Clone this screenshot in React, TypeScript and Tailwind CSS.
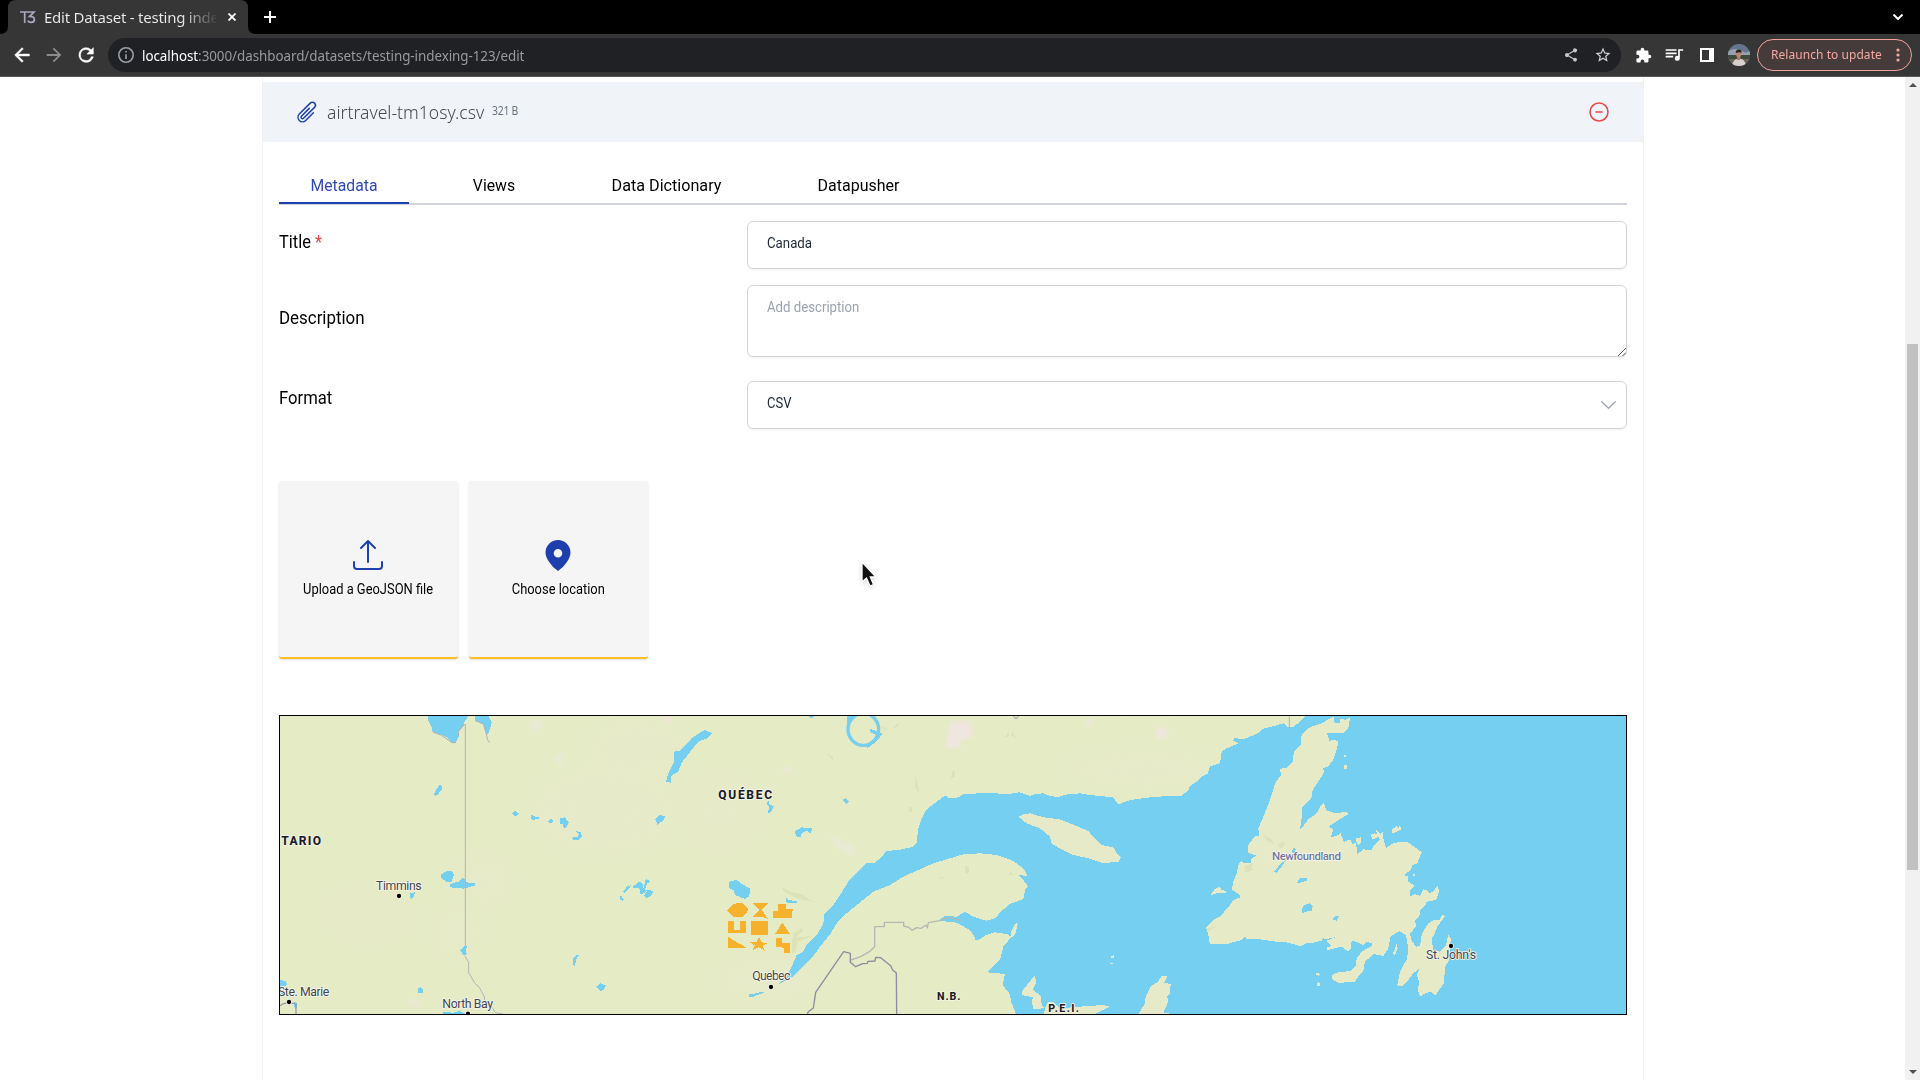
import React from "react";

const WATER = "#75cff0";
const LAND = "#e5ebc4";

/* Map geometry is written in thirds of a pixel; `at` shifts a tile's points east. */
const at = (dx: number, points: string) =>
  points
    .trim()
    .split(/\s+/)
    .map((p) => {
      const [x, y] = p.split(",").map(Number);
      return `${x + dx},${y}`;
    })
    .join(" ");

const A = 0;
const B = 1050;
const C = 2130;
const D = 3090;

const gulf = [
  at(B, "475,853 500,830 515,800 530,765 548,757 560,735 590,705 610,672 612,645 640,615 660,585 687,542 715,515 740,490 765,488 785,470 800,453 835,450 880,440 892,425 893,390 905,355 918,330 950,305 975,287 990,295 1015,292 1030,282 1080,280"),
  at(C, "50,280 80,283 118,277 150,288 165,282 190,280 210,288 235,291 262,283 300,280 330,285 400,292 405,300 415,313 450,300 500,293 560,288 605,288 625,270 630,258 650,245 668,228 682,222 690,200 720,190 725,155 740,145 775,130 760,122 762,114 790,118 830,102 850,86 885,77 910,70 922,82 940,80 960,65 975,48"),
  "4068,48 4068,942",
  at(C, "108,942 95,910 88,880 68,855 75,822 22,817 60,780 70,740 95,710 80,702 45,697 15,707 0,718"),
  at(B, "1068,722 1060,705 1050,690 1010,668 955,662 975,648 1010,650 1035,635 1060,650"),
  at(C, "0,657 20,662 45,655 65,633 90,612 130,597 135,570 145,560 130,540 115,525 143,528 130,505 95,480 50,465 0,460"),
  at(B, "1030,463 980,478 940,490 900,508 850,530 810,555 760,575 710,615 680,640 650,670 632,700 600,740 575,775 540,810 515,832"),
].join(" ");

const newfoundland = [
  at(D, "100,50 104,68 120,68 122,55 135,60 150,52 145,85 130,98 80,98 88,122 103,120 115,124 110,150 100,178 86,198 70,205 72,218 55,245 38,270 35,292 20,308 5,322 5,355 0,390 25,358 50,340 62,318 72,308 78,330 105,340 140,335 146,342 115,360 86,380 100,388 92,412 110,408 122,400 132,426 150,418 158,432 168,428 172,462 190,448 214,450 225,432 240,420 230,398 228,388 240,402 248,395 250,415 258,444 275,432 300,425 322,425 365,457 352,490 338,495 332,510 312,525 325,530 325,545 345,558 330,572 330,590 345,582 360,588 370,568 380,570 390,580 402,572 412,557 418,572 408,600 380,605 378,615 360,630 358,650 345,660 348,680 330,700 335,722 348,740 360,738 366,700 385,670 400,660 418,660 428,643 434,650 412,680 402,705 395,715 400,752 420,755 438,735 445,704 452,715 450,770 445,785 435,800 432,850 405,887 395,875 375,880 360,890 354,870 357,845 350,825 360,805 340,820 325,840 312,855 300,860 292,855 300,815 322,775 324,740 318,705 298,693 272,710 265,745 250,768 220,762 212,770 195,785 190,812 175,830 165,845 145,845 120,850 98,840 96,826 110,818 150,813 168,795 170,775 185,755 215,738 215,728 200,727 190,735 160,722 152,730 155,745 145,755 125,740 105,745 82,750 80,743 95,738 80,722 105,712 75,718 70,712 65,722 45,727 20,730 0,740"),
  at(C, "960,738 925,728 880,724 840,718 800,718 795,710 785,720 740,732 690,733 685,705 678,683 700,660 720,650 750,615 760,600 780,592 778,582 755,570 760,545 770,520 775,495 785,482 790,490 812,490 815,475 828,467 805,458 805,435 825,408 838,408 835,385 850,350 865,312 875,285 885,250 905,222 898,207 920,203 938,185 942,155 962,135 965,105 980,88 1000,78 1020,72"),
].join(" ");

const islands = [
  at(C, "115,350 130,343 150,340 190,352 240,358 290,378 325,393 340,412 365,435 400,442 410,460 422,472 415,487 365,488 325,475 280,465 250,450 215,432 210,410 180,385 140,370"),
  at(C, "165,825 168,850 158,868 182,888 185,912 192,925 160,927 155,905 160,892 125,885 125,875 145,850"),
  at(C, "192,942 195,925 205,905 220,905 240,925 300,920 370,915 388,920 350,940 348,942"),
  at(C, "475,942 495,910 497,890 512,860 535,845 545,826 562,830 552,848 572,852 570,880 562,890 565,905 550,937 575,942"),
  at(C, "693,585 703,568 720,560 725,570 740,573 735,580 715,578"),
  at(C, "93,710 95,690 108,668 113,672 106,700 98,712"),
  at(C, "393,770 404,764 402,772 395,776"),
  at(C, "390,789 398,788 398,792 390,792"),
  at(D, "277,388 290,378 296,383 298,376 305,388 295,392 280,400 277,398"),
  at(D, "290,730 293,745 285,765 278,762 285,745"),
  at(D, "214,403 225,400 238,410 220,418 215,415"),
  at(D, "168,415 182,412 182,428 175,434 168,425"),
  at(D, "133,195 143,197 141,207 133,206"),
  at(D, "132,164 138,164 138,170 132,170"),
  at(D, "48,817 60,822 56,828 49,824"),
  at(D, "50,850 57,846 62,856 50,858"),
  at(D, "339,521 345,521 345,527 339,527"),
  at(D, "0,48 12,48 0,62 -10,72"),
];

const lakes = [
  at(A, "474,48 596,48 584,62 582,78 565,95 567,108 557,128 546,128 535,115 515,105 488,95 484,78 474,60"),
  at(A, "614,48 655,48 665,68 660,85 656,100 649,105 646,90 640,72 616,62"),
  at(A, "495,275 508,255 516,258 515,268 505,282 497,287 492,284"),
  at(A, "726,340 735,333 746,340 740,348 730,346"),
  at(A, "783,343 795,350 815,354 798,357 785,362"),
  at(A, "833,364 842,357 850,360 845,370 836,368"),
  at(A, "870,355 885,352 896,368 888,384 878,382 880,374 871,372"),
  at(A, "917,392 932,397 936,408 925,420 905,418 912,410 924,410 926,402"),
  at(A, "513,524 530,513 544,512 552,524 544,548 530,545 515,535"),
  at(A, "540,552 565,545 580,533 590,547 615,550 614,557 580,566 542,562"),
  at(A, "420,580 435,577 432,588 425,597 420,594"),
  at(A, "571,752 580,740 592,738 588,750 590,762 582,767"),
  at(A, "910,775 920,763 927,765 918,780 915,798 908,795"),
  at(A, "978,860 992,850 1008,857 1000,870 990,873"),
  at(A, "442,866 452,862 460,870 457,880 445,880"),
  at(A, "30,840 48,843 51,856 30,860"),
  at(A, "30,868 42,870 38,890 30,892"),
  at(A, "520,936 550,938 570,932 586,942 520,942"),
  at(A, "70,905 82,910 82,922 75,928"),
  at(B, "0,600 2,585 12,600 8,602"),
  at(B, "10,575 22,558 33,556 28,566 14,580"),
  at(B, "36,562 60,544 68,552 70,565 78,535 90,545 80,552 75,570 98,572 97,585 80,595 72,588 80,574 62,585 60,566"),
  at(B, "255,90 278,100 262,115 235,125 215,150 185,188 175,215 155,225 152,248 138,246 145,220 162,185 163,155 180,152 215,115 240,98"),
  at(B, "106,358 120,345 138,350 128,362 112,374"),
  at(B, "444,300 450,315 462,318 450,340 445,338 446,320 441,312"),
  at(B, "523,395 545,382 575,385 574,402 560,392 545,400 543,410 532,412"),
  at(B, "667,297 678,295 688,306 678,312"),
  at(B, "328,545 350,540 365,552 390,565 388,588 375,597 345,585 342,572 328,565"),
  at(B, "498,594 508,600 530,604 530,608 500,608"),
  at(B, "384,884 400,882 430,874 432,878 400,890 388,890"),
  at(B, "564,48 582,48 582,52 572,54"),
  at(C, "880,516 895,500 905,488 918,480 905,500 890,518"),
  at(C, "948,550 960,536 980,535 980,542 955,550"),
  at(C, "940,445 947,446 945,460 935,458"),
  at(D, "5,628 12,615 30,609 38,620 35,632 15,636 6,640"),
  at(D, "99,655 108,647 117,647 110,662 101,660"),
  at(D, "0,534 20,536 18,544 0,542"),
];

const shade = [
  at(B, "482,558 510,575 545,582 580,606 530,595 492,575"),
  at(B, "520,700 545,685 550,690 530,712 575,708 560,715 532,725 528,750 515,765 515,735"),
  at(B, "625,158 638,170 638,182 626,170"),
  at(B, "885,228 893,250 898,280 886,262"),
  at(B, "995,215 1006,212 1006,232 994,234"),
  at(B, "782,75 800,85 795,95"),
  at(B, "820,80 837,68 832,80 822,86"),
  at(B, "868,322 876,322 876,336 868,336"),
  at(B, "1035,498 1047,500 1045,522 1034,520"),
  at(B, "955,530 978,530 962,536"),
  at(C, "75,112 85,95 88,108"),
  at(C, "92,106 98,94 108,112"),
  at(C, "848,402 875,418 882,432 858,420"),
  at(C, "893,435 912,422 914,436 902,445"),
  at(C, "790,500 815,490 818,510 798,518"),
  at(C, "85,525 92,514 102,527"),
  at(C, "680,685 712,678 685,694"),
];

const blotches = [
  [800, 75, 18, 18, "#eae9d6"],
  [866, 180, 10, 18, "#eae9d6"],
  [2130 + 545, 98, 20, 18, "#efe6de"],
  [2130 + 325, 65, 10, 14, "#ebe8d8"],
  [1050 + 142, 56, 12, 12, "#f0e3da"],
  [1050 + 500, 210, 14, 10, "#ebe8d8"],
  [430, 908, 16, 14, "#ebe8d4"],
] as const;

const washes = [
  [640, 540, 90, 60, "#e7eaca"],
  [1000, 330, 220, 140, "#e6eac9"],
  [1100, 140, 160, 90, "#e6eac9"],
  [560, 700, 70, 70, "#e7eaca"],
  [1500, 840, 160, 60, "#e7eaca"],
  [1350, 330, 140, 120, "#e6eac8"],
  [300, 640, 140, 90, "#e6eac8"],
  [2130 + 500, 210, 260, 60, "#e6eac9"],
] as const;

const shapes = [
  "321,630 342,611 368,609 384,626 382,636 368,650 338,650",
  "398,609 444,609 426,630 443,656 432,652 398,650 418,630",
  "475,612 497,612 497,628 518,628 516,654 459,654 459,632 475,632",
  "324,664 341,664 341,689 360,689 360,662 378,662 378,699 324,699",
  "393,664 443,663 444,705 393,704",
  "487,668 510,701 465,702",
  "324,711 381,744 324,744",
  "417,710 424,727 443,729 428,738 434,752 416,742 398,751 404,736 390,727 410,727",
  "468,714 486,714 486,729 509,729 509,758 491,758 491,743 468,741",
];

type LabelProps = { x: number; y: number; w: number; size: number; kind: "city" | "state" | "island"; children: string };

function MapLabel({ x, y, w, size, kind, children }: LabelProps) {
  const fill = kind === "state" ? "#1c1c24" : kind === "island" ? "#7474a2" : "#45454d";
  return (
    <text
      x={x}
      y={y}
      textLength={w}
      fontSize={size}
      fill={fill}
      stroke="#f5f6ec"
      strokeWidth={5}
      strokeLinejoin="round"
      paintOrder="stroke"
      fontWeight={kind === "state" ? 800 : kind === "island" ? 500 : 400}
      fontFamily="Roboto, sans-serif"
    >
      {children}
    </text>
  );
}

function Poly({ list, fill }: { list: readonly string[]; fill: string }) {
  return (
    <>
      {list.map((p) => (
        <polygon key={p} points={p} fill={fill} shapeRendering="crispEdges" />
      ))}
    </>
  );
}

function CoverageMap() {
  return (
    <div className="mt-14 h-[300px] w-[1348px] border border-black">
      <svg className="block h-full w-full" viewBox="30 48 4038 894" preserveAspectRatio="none">
        <defs>
          <filter id="soft" x="-100%" y="-100%" width="300%" height="300%">
            <feGaussianBlur stdDeviation="6" />
          </filter>
          <filter id="softer" x="-100%" y="-100%" width="300%" height="300%">
            <feGaussianBlur stdDeviation="40" />
          </filter>
        </defs>
        <rect x="30" y="48" width="4038" height="894" fill={LAND} />
        {washes.map(([x, y, rx, ry, c]) => (
          <ellipse key={`${x}-${y}`} cx={x} cy={y} rx={rx} ry={ry} fill={c} filter="url(#softer)" />
        ))}
        {blotches.map(([x, y, rx, ry, c]) => (
          <ellipse key={`${x}-${y}`} cx={x} cy={y} rx={rx} ry={ry} fill={c} filter="url(#soft)" />
        ))}
        <polygon points={at(B, "990,62 1048,62 1060,110 1025,118 1018,145 975,142 985,95")} fill="#f0e6e0" filter="url(#soft)" />
        <polygon points={at(B, "632,405 690,430 710,465 680,462 640,435")} fill="#e9ead4" filter="url(#soft)" />
        <polygon points={gulf} fill={WATER} shapeRendering="crispEdges" />
        <polygon points={newfoundland} fill="#e6eac6" shapeRendering="crispEdges" />
        <Poly list={islands} fill="#e6eac8" />
        <Poly list={shade} fill="#dde2b9" />
        <Poly list={lakes} fill={WATER} />
        <ellipse cx={B + 730} cy={88} rx={46} ry={48} fill="none" stroke={WATER} strokeWidth={10} />
        <Poly list={[at(B, "682,48 706,48 690,70 680,75"), at(B, "750,87 775,95 788,102 768,125 742,145 738,134 762,118 768,105 752,98")]} fill={WATER} />
        <g fill="none" strokeLinejoin="round">
          <path d="M586 72V740M584 767L596 787V818L615 850L628 862L643 890L645 910L668 925L676 938L700 942" stroke="#b4b4b8" strokeWidth="3" />
          <path d="M488 96L515 106L546 128H557M565 108V95L584 72M616 62L640 72L650 105L652 118L659 128" stroke="#b0b0bc" strokeWidth="3" />
          <path d="M30 917L42 910H78V942" stroke="#9a9aae" strokeWidth="4" />
          <path d="M3058 48V92" stroke="#b4b4b8" strokeWidth="3" />
          <polyline points={at(B, "692,780 722,770 748,755 764,740 764,680 793,680 793,667 851,667 851,678 866,682 876,691 890,683 903,685 918,675 922,684 925,668 960,662 985,652 1025,662")} stroke="#b7b8b4" strokeWidth="4" />
          <polyline points={at(B, "562,942 565,935 580,924 587,877 671,755 691,760 691,787 707,800 728,791 742,790 744,784 765,783 767,772 782,773 812,797 818,810 829,819 830,942")} stroke="#8d8ca0" strokeWidth="4" />
          <polyline points={at(C, "100,48 108,56 116,48")} stroke="#b7b8b4" strokeWidth="4" />
        </g>
        <g transform="translate(1050 0)">
          <Poly list={shapes} fill="#f6b22c" />
        </g>
        {[
          [387, 588],
          [57, 906],
          [594, 941],
          [B + 453, 861],
          [D + 453, 738],
        ].map(([x, y]) => (
          <circle key={x} cx={x} cy={y} r="6.5" fill="#000" stroke="#f5f6ec" strokeWidth="4" paintOrder="stroke" />
        ))}
        <MapLabel x={34} y={436} w={119} size={36} kind="state">TARIO</MapLabel>
        <MapLabel x={318} y={570} w={137} size={37} kind="city">Timmins</MapLabel>
        <MapLabel x={24} y={888} w={154} size={37} kind="city">Ste. Marie</MapLabel>
        <MapLabel x={517} y={923} w={152} size={37} kind="city">North Bay</MapLabel>
        <MapLabel x={B + 295} y={296} w={161} size={36} kind="state">QUÉBEC</MapLabel>
        <MapLabel x={B + 397} y={841} w={114} size={37} kind="city">Quebec</MapLabel>
        <MapLabel x={B + 951} y={900} w={70} size={32} kind="state">N.B.</MapLabel>
        <MapLabel x={C + 205} y={937} w={92} size={32} kind="state">P.E.I.</MapLabel>
        <MapLabel x={C + 876} y={481} w={207} size={35} kind="island">Newfoundland</MapLabel>
        <MapLabel x={D + 378} y={776} w={150} size={37} kind="city">St. John's</MapLabel>
      </svg>
    </div>
  );
}

function TabStrip() {
  return (
    <div className="flex h-[34px] items-end bg-black pl-2">
      <div className="relative flex h-[34px] w-[240px] items-center">
        <svg className="absolute inset-0 h-[34px] w-[240px] overflow-visible" viewBox="0 0 240 34">
          <path d="M-8 34Q0 34 0 26V8Q0 0 8 0H232Q240 0 240 8V26Q240 34 248 34Z" fill="#363636" />
        </svg>
        <svg className="relative ml-3 h-3.5 w-4" viewBox="0 0 16 14" fill="none" stroke="#aaa9c0" strokeWidth="1.7">
          <path d="M0 2H14L9.600 6.400Q14.400 6.400 14.400 9.400Q14.400 12.400 11 12.400Q8.800 12.400 7.800 10.800M4.700 2V13" />
        </svg>
        <div className="relative ml-2 w-[172px] bg-linear-to-r from-[#ececec] from-80% to-[#363636] to-[102%] bg-clip-text font-['Noto_Sans'] text-[15px] whitespace-nowrap text-transparent">
          <span className="tracking-[-0.24px]">Edit Dataset - testing inde</span>
        </div>
        <svg className="relative ml-3 size-2" viewBox="0 0 8 8" stroke="#fff" strokeWidth="1.8">
          <path d="M.5 .5L7.5 7.5M7.5 .5L.5 7.5" />
        </svg>
      </div>
      <svg className="mb-[11px] ml-4 size-3" viewBox="0 0 12 12" stroke="#fff" strokeWidth="2">
        <path d="M6 0V12M0 6H12" />
      </svg>
      <svg className="mr-[17px] mb-[14px] ml-auto h-1.5 w-2.5" viewBox="0 0 10 6" fill="none" stroke="#fff" strokeWidth="2">
        <path d="M.5 .5L5 5L9.5 .5" />
      </svg>
    </div>
  );
}

function AddressBar() {
  return (
    <div className="flex h-[43px] items-center border-b border-[#5a5a5a] bg-[#363636] pl-[11px] font-['Noto_Sans']">
      <svg className="size-[22px] fill-white" viewBox="0 0 24 24">
        <path d="M20 11H7.83l5.59-5.59L12 4l-8 8 8 8 1.41-1.41L7.83 13H20v-2z" stroke="#fff" strokeWidth=".6" />
      </svg>
      <svg className="ml-2.5 size-[22px] fill-[#8b8b8b]" viewBox="0 0 24 24">
        <path d="M12 4l-1.41 1.41L16.17 11H4v2h12.17l-5.58 5.59L12 20l8-8z" />
      </svg>
      <svg className="ml-2.5 size-[22px] fill-white" viewBox="0 0 24 24">
        <path d="M17.65 6.35A7.96 7.96 0 0012 4a8 8 0 108 10h-2.3A6 6 0 1112 6c1.66 0 3.14.69 4.22 1.78L13 11h7V4z" stroke="#fff" strokeWidth=".6" />
      </svg>
      <div className="ml-[11px] flex h-[34px] w-[1513px] items-center rounded-full bg-[#202124] pl-2.5">
        <svg className="size-4 fill-[#9aa0a6]" viewBox="2 2 20 20">
          <path d="M11 7h2v2h-2zm0 4h2v6h-2zm1-9a10 10 0 100 20 10 10 0 000-20zm0 18a8 8 0 110-16 8 8 0 010 16z" />
        </svg>
        <span className="ml-2 origin-left scale-x-[0.956] text-[14px] tracking-[-0.05px] whitespace-nowrap text-[#9a9a9a]">
          <span className="text-white">localhost</span>:3000/dashboard/datasets/testing-indexing-123/edit
        </span>
        <svg className="mr-[15px] ml-auto size-4 fill-[#c4c7ca]" viewBox="0 0 24 24">
          <path d="M18 16.08c-.76 0-1.44.3-1.96.77L8.91 12.7c.05-.23.09-.46.09-.7s-.04-.47-.09-.7l7.05-4.11A3 3 0 1015 5c0 .24.04.47.09.7L8.04 9.81a3 3 0 100 4.38l7.12 4.16a2.92 2.92 0 102.84-2.27z" />
        </svg>
        <svg className="mr-[9px] size-[18px] fill-[#d0d3d6]" viewBox="0 0 24 24">
          <path d="M22 9.24l-7.19-.62L12 2 9.19 8.63 2 9.24l5.46 4.73L5.82 21 12 17.27 18.18 21l-1.63-7.03L22 9.24zM12 15.4l-3.76 2.27 1-4.28-3.32-2.88 4.38-.38L12 6.1l1.71 4.04 4.38.38-3.32 2.88 1 4.28L12 15.4z" />
        </svg>
      </div>
      <svg className="ml-3.5 size-[17px] fill-white" viewBox="0 0 24 24">
        <path d="M20.5 11H19V7a2 2 0 00-2-2h-4V3.5a2.5 2.5 0 00-5 0V5H4a2 2 0 00-2 2v3.8h1.5a2.7 2.7 0 010 5.4H2V20a2 2 0 002 2h3.800v-1.5a2.700 2.700 0 015.400 0V22H17a2 2 0 002-2v-4h1.500a2.500 2.500 0 000-5z" />
      </svg>
      <svg className="ml-3 size-5 fill-white" viewBox="0 0 24 24">
        <path d="M15 6H2v2h13zM15 10H2v2h13zM2 16h9v-2H2zM17 6v8.180A3 3 0 1019 17V8h4V6z" transform="translate(0 -1)" />
      </svg>
      <svg className="ml-4 size-[14px] fill-white" viewBox="0 0 14 14">
        <path fillRule="evenodd" d="M0 0H14V14H0ZM2 2V12H9V2Z" />
      </svg>
      <svg className="ml-3.5 size-[22px] rounded-full" viewBox="0 0 22 22">
        <rect width="22" height="22" fill="#65758f" />
        <path d="M0 7Q8 3 14 7T22 5V11H0Z" fill="#98a1b0" />
        <rect y="11" width="22" height="4" fill="#3d4a3c" />
        <rect y="15" width="22" height="7" fill="#6a6350" />
        <path d="M4 22Q5 15 10 14.500H12Q17 15 18 22Z" fill="#d9cfcf" />
        <path d="M9 12H12V16H9Z" fill="#b07a62" />
        <ellipse cx="10.700" cy="10" rx="2.600" ry="3.400" fill="#b98770" />
        <path d="M7.800 9Q7.500 5.500 10.700 5.500T13.500 9Q12 7.300 7.800 9Z" fill="#2b1e1a" />
      </svg>
      <div className="ml-[7px] flex h-8 w-[155px] items-center rounded-full border border-[#f2a49c] bg-[#463b3b] pl-[13px] text-[#f2a9a2]">
        <span className="w-[110px] origin-left scale-x-[0.92] text-[13px] tracking-[0.08px] whitespace-nowrap">Relaunch to update</span>
        <svg className="mr-[11px] ml-auto h-3.5 w-1 shrink-0 fill-[#f5aaa2]" viewBox="0 0 4 14">
          <circle cx="2" cy="2" r="1.600" />
          <circle cx="2" cy="7" r="1.600" />
          <circle cx="2" cy="12" r="1.600" />
        </svg>
      </div>
    </div>
  );
}

function FileHeader() {
  return (
    <div className="mt-[5px] flex h-[60px] items-center bg-[#f0f4f9] pr-8 pl-8">
      <svg className="size-6" viewBox="0 0 24 24" fill="none" stroke="#1e40af" strokeWidth="1.500" strokeLinecap="round" strokeLinejoin="round">
        <path d="M18.375 12.739l-7.693 7.693a4.500 4.500 0 01-6.364-6.364l10.940-10.940A3 3 0 1119.500 7.372L8.552 18.320m.009-.010l-.010.010m5.699-9.941l-7.810 7.810a1.500 1.500 0 002.112 2.130" />
      </svg>
      <span className="ml-2 w-[157px] origin-left scale-x-[0.925] font-['Noto_Sans'] text-[19px] font-light whitespace-nowrap text-[#48494c]">airtravel-tm1osy.csv</span>
      <span className="mb-0.5 ml-2 origin-left scale-x-[0.87] font-['Noto_Sans'] text-[12px] tracking-[-0.3px] text-[#6b7280]">321 B</span>
      <svg className="ml-auto size-6" viewBox="0 0 24 24" fill="none" stroke="#ef4444" strokeWidth="1.500" strokeLinecap="round">
        <path d="M15 12H9m12 0a9 9 0 11-18 0 9 9 0 0118 0z" />
      </svg>
    </div>
  );
}

function Tabs() {
  return (
    <div className="mt-7 flex h-[35px] items-start text-[17px] text-black shadow-[inset_0_-2px_0_#d1d5db]">
      <div className="h-[34px] w-[130px] border-b-2 border-[#1e40af] pt-[3px] text-center leading-6 text-[#3049b8]">
        <div className="scale-x-[0.925]">Metadata</div>
      </div>
      <div className="w-[170px] scale-x-[0.93] pt-[3px] text-center leading-6">Views</div>
      <div className="w-[175px] scale-x-[0.95] pt-[3px] text-center leading-6">Data Dictionary</div>
      <div className="w-[209px] scale-x-[0.94] pt-[3px] text-center leading-6">Datapusher</div>
    </div>
  );
}

function Fields() {
  return (
    <div className="grid grid-cols-[468px_880px] text-[19px] text-black">
      <label className="mt-[23px] origin-left scale-x-[0.865] leading-7">
        Title <span className="text-[#ef4444]">*</span>
      </label>
      <div className="mt-4 h-12 rounded-md border border-[#d1d5db] pt-3 pl-[18.500px] text-[14.5px] leading-5 text-[#1f2937] shadow-xs">
        <div className="origin-left scale-x-[0.913]">Canada</div>
      </div>
      <label className="mt-[35px] origin-left scale-x-[0.89] leading-7">Description</label>
      <div className="relative mt-4 h-[72px] rounded-md border border-[#d1d5db] pt-3 pl-[18.500px] text-[14.5px] leading-5 text-[#9ca3af] shadow-xs">
        <div className="origin-left scale-x-[0.91]">Add description</div>
        <svg className="absolute right-0 bottom-0 size-2" viewBox="0 0 8 8" stroke="#555" strokeWidth="1">
          <path d="M0 8L8 0M4.500 8L8 4.500" />
        </svg>
      </div>
      <label className="mt-[27px] origin-left scale-x-[0.875] leading-7">Format</label>
      <div className="mt-6 flex h-12 justify-between rounded-md border border-[#d1d5db] pt-3 pr-2.5 pl-[18.500px] text-[14.5px] leading-5 text-[#1f2937] shadow-xs">
        <div className="origin-left scale-x-[0.9]">CSV</div>
        <svg className="mt-[7px] h-2 w-[15px]" viewBox="0 0 15 8" fill="none" stroke="#9ca3af" strokeWidth="1.200" strokeLinecap="round">
          <path d="M.7 .7L7.500 7.300L14.300 .7" />
        </svg>
      </div>
    </div>
  );
}

function LocationCard({ label, children }: { label: string; children: React.ReactNode }) {
  return (
    <div className="flex h-[178px] w-[179px] flex-col items-center rounded-[3px] border-b-2 border-[#fbbf24] bg-[#f5f5f5] pt-[58px] shadow-sm">
      {children}
      <span className="mt-[7px] scale-x-[0.89] text-[14.5px] leading-6 whitespace-nowrap text-black">{label}</span>
    </div>
  );
}

export default function App() {
  return (
    <div className="flex h-[1080px] w-[1920px] flex-col overflow-hidden bg-white font-[Roboto,sans-serif]">
      <TabStrip />
      <AddressBar />
      <div className="flex min-h-0 flex-1">
        <div className="relative ml-[262px] w-[1382px] border-x border-[#f0f1f4]">
          <FileHeader />
          <div className="px-4">
            <Tabs />
            <Fields />
            <div className="mt-[52px] flex gap-[11px]">
              <LocationCard label="Upload a GeoJSON file">
                <svg className="mr-px h-8 w-8" viewBox="0 0 32 32" fill="none" stroke="#1e40af" strokeWidth="2" strokeLinecap="round" strokeLinejoin="round">
                  <path d="M16 23V2M9 9L16 2L23 9M2 23V27Q2 30 5 30H27Q30 30 30 27V23" />
                </svg>
              </LocationCard>
              <LocationCard label="Choose location">
                <svg className="mr-px h-8 w-8 fill-[#1e40af]" viewBox="0 0 32 32">
                  <path fillRule="evenodd" d="M16 32Q11 29 7.500 23.500Q3.500 18 3.500 13.500A12.500 12.500 0 0128.500 13.500Q28.500 18 24.500 23.500Q21 29 16 32ZM16 10A4.300 4.300 0 1016 18.600A4.300 4.300 0 1016 10Z" />
                </svg>
              </LocationCard>
            </div>
            <CoverageMap />
          </div>
          <svg className="absolute top-[483px] left-[597px] h-7 w-5 drop-shadow-sm" viewBox="0 0 20 28">
            <path d="M2 2V22L6.500 18L10 26L13.500 24.500L10.300 17H16Z" fill="#111" stroke="#fff" strokeWidth="1.300" />
          </svg>
        </div>
        <div className="ml-auto flex w-[15px] flex-col items-center bg-[#f1f1f1]">
          <div className="mt-1.5 h-0 w-0 border-x-4 border-b-4 border-x-transparent border-b-[#505050]" />
          <div className="mt-[257px] h-[526px] w-[11px] bg-[#c1c1c1]" />
          <div className="mt-auto mb-1.5 h-0 w-0 border-x-4 border-t-4 border-x-transparent border-t-[#505050]" />
        </div>
      </div>
    </div>
  );
}
